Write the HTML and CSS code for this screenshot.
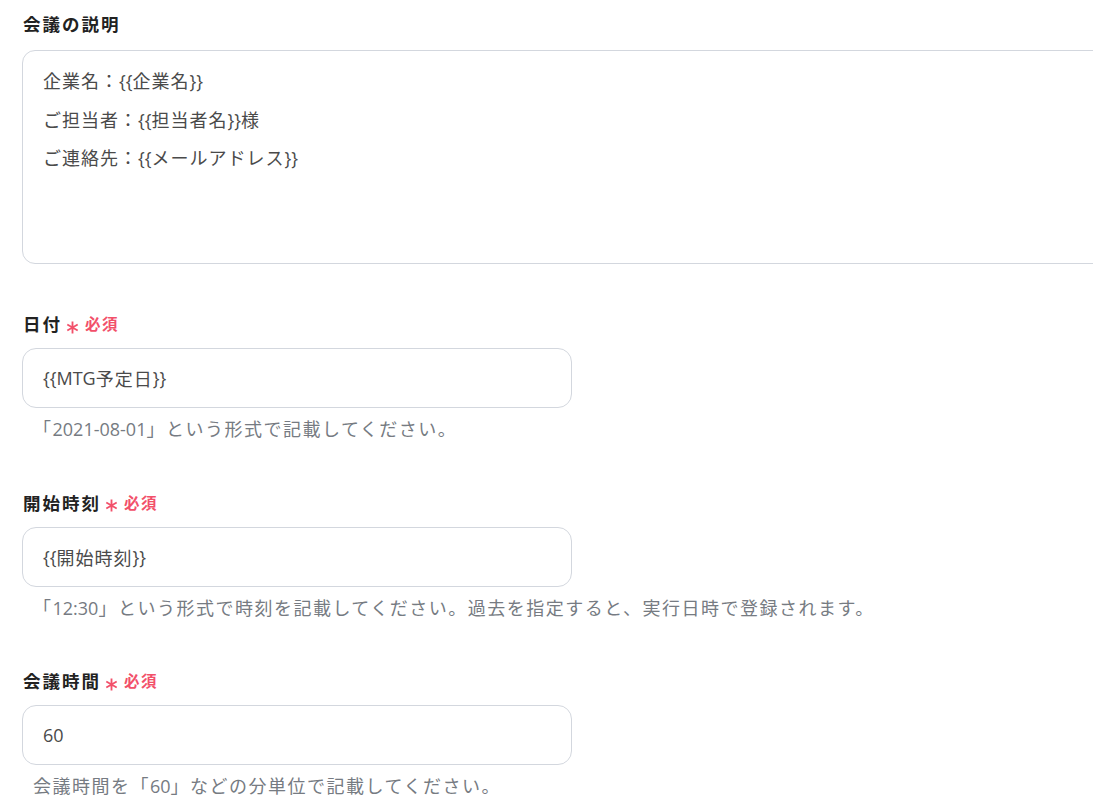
FILE: index.html
```html
<!DOCTYPE html>
<html lang="ja">
<head>
<meta charset="utf-8">
<link rel="stylesheet" href="styles.css">
</head>
<body>
<form class="form">
  <div class="field field-first">
    <div class="label"><span class="label-text">会議の説明</span></div>
    <div class="textarea">
      <p>企業名：<span class="lat">{{</span>企業名<span class="lat">}}</span></p>
      <p>ご担当者：<span class="lat">{{</span>担当者名<span class="lat">}}</span>様</p>
      <p>ご連絡先：<span class="lat">{{</span>メールアドレス<span class="lat">}}</span></p>
    </div>
  </div>

  <div class="field">
    <div class="label">
      <span class="label-text">日付</span>
      <svg class="req-mark" viewBox="0 0 12 12"><path d="M6 0.5V11.5M1.2 3.25L10.8 8.75M10.8 3.25L1.2 8.75"/></svg>
      <span class="req">必須</span>
    </div>
    <div class="input"><span class="lat">{{MTG</span>予定日<span class="lat">}}</span></div>
    <div class="help">「<span class="lat">2021-08-01</span>」という形式で記載してください。</div>
  </div>

  <div class="field">
    <div class="label">
      <span class="label-text">開始時刻</span>
      <svg class="req-mark" viewBox="0 0 12 12"><path d="M6 0.5V11.5M1.2 3.25L10.8 8.75M10.8 3.25L1.2 8.75"/></svg>
      <span class="req">必須</span>
    </div>
    <div class="input"><span class="lat">{{</span>開始時刻<span class="lat">}}</span></div>
    <div class="help">「<span class="lat">12:30</span>」という形式で時刻を記載してください。過去を指定すると、実行日時で登録されます。</div>
  </div>

  <div class="field">
    <div class="label">
      <span class="label-text">会議時間</span>
      <svg class="req-mark" viewBox="0 0 12 12"><path d="M6 0.5V11.5M1.2 3.25L10.8 8.75M10.8 3.25L1.2 8.75"/></svg>
      <span class="req">必須</span>
    </div>
    <div class="input"><span class="lat">60</span></div>
    <div class="help">会議時間を「<span class="lat">60</span>」などの分単位で記載してください。</div>
  </div>
</form>
</body>
</html>
```

FILE: styles.css
```css
html, body {
  margin: 0;
  padding: 0;
  background: #ffffff;
}

body {
  font-family: "Open Sans", "Noto Sans CJK JP", sans-serif;
  color: #444;
  overflow: hidden;
}

.lat {
  letter-spacing: 0;
}

.form {
  padding: 12px 0 0 22px;
  display: flex;
  flex-direction: column;
  gap: 49.5px;
}

.field {
  display: flex;
  flex-direction: column;
}

.field-first + .field {
  margin-top: -1.5px;
}

.label {
  display: flex;
  align-items: center;
  height: 24px;
  margin-bottom: 12px;
  padding-left: 1px;
}

.field-first .label {
  margin-bottom: 14px;
}

.label-text {
  font-size: 17.5px;
  font-weight: 700;
  letter-spacing: 2px;
  color: #222;
  line-height: 24px;
}

.req-mark {
  width: 13px;
  height: 13px;
  margin-left: 4px;
  margin-top: 6px;
  stroke: #f2506a;
  stroke-width: 1.7;
  fill: none;
}

.req {
  margin-left: 6px;
  font-size: 15.5px;
  font-weight: 700;
  letter-spacing: 1.5px;
  color: #f2506a;
  line-height: 24px;
}

.textarea {
  box-sizing: border-box;
  width: 1100px;
  height: 214px;
  border: 1px solid #d3d7de;
  border-radius: 13px;
  padding: 11px 20px;
  font-size: 18px;
  letter-spacing: 1px;
  color: #4a4a4a;
}

.textarea p {
  margin: 0;
  line-height: 38.5px;
}

.input {
  box-sizing: border-box;
  width: 550px;
  height: 60px;
  border: 1px solid #d3d7de;
  border-radius: 14px;
  padding: 0 20px;
  display: flex;
  align-items: center;
  font-size: 18px;
  letter-spacing: 1px;
  color: #4a4a4a;
}

.help {
  margin-top: 9px;
  padding-left: 11px;
  font-size: 18px;
  letter-spacing: 1.5px;
  line-height: 24px;
  color: #767b82;
}
```
